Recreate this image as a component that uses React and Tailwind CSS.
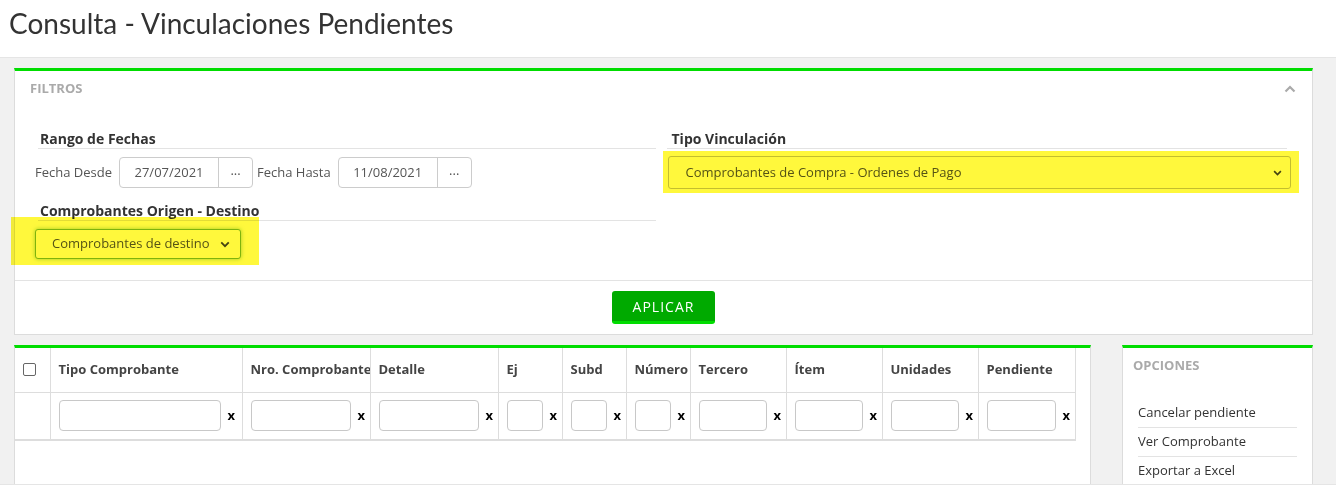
const columns = [
  { label: "Tipo Comprobante", w: "w-[192px]", input: "w-[162px]" },
  { label: "Nro. Comprobante", w: "w-[128px]", input: "w-[100px]" },
  { label: "Detalle", w: "w-[128px]", input: "w-[100px]" },
  { label: "Ej", w: "w-[64px]", input: "w-[36px]" },
  { label: "Subd", w: "w-[64px]", input: "w-[36px]" },
  { label: "Número", w: "w-[64px]", input: "w-[36px]" },
  { label: "Tercero", w: "w-[96px]", input: "w-[68px]" },
  { label: "Ítem", w: "w-[96px]", input: "w-[68px]" },
  { label: "Unidades", w: "w-[96px]", input: "w-[68px]" },
  { label: "Pendiente", w: "w-[97px]", input: "w-[69px]" },
];

const options = ["Cancelar pendiente", "Ver Comprobante", "Exportar a Excel"];

function Chevron({ className }) {
  return (
    <svg viewBox="0 0 12 8" className={className} fill="none">
      <path d="M1.5 1.5L6 6l4.5-4.5" stroke="currentColor" strokeWidth="2.2" />
    </svg>
  );
}

function DateField({ label, value, className = "" }) {
  return (
    <>
      <span className={`text-[13px] text-[#555] ${className}`}>{label}</span>
      <div className="ml-[7px] flex h-[31px] rounded-[4px] border border-[#ccc] bg-white">
        <span className="flex w-[98px] items-center justify-center text-[13px] text-[#555]">
          {value}
        </span>
        <span className="flex w-[34px] items-center justify-center border-l border-[#ccc] pb-1 text-[13px] text-[#555]">
          ...
        </span>
      </div>
    </>
  );
}

function Legend({ children, className }) {
  return (
    <div
      className={`border-b border-[#e3e3e3] pl-[2px] text-[14px] font-bold leading-[19px] text-[#333] ${className}`}
    >
      {children}
    </div>
  );
}

export default function App() {
  return (
    <div className="h-[494px] w-[1336px] overflow-hidden bg-white font-['Open_Sans',sans-serif]">
      <header className="h-[58px] border-b border-[#e5e5e5] bg-white px-[9px] pt-[2px]">
        <h1 className="font-['Lato',sans-serif] text-[28px] leading-[42px] text-[#333]">
          Consulta - Vinculaciones Pendientes
        </h1>
      </header>

      <main className="h-[426px] overflow-hidden bg-[#f1f1f1] pl-[14px] pr-[23px] pt-[10px]">
        {/* Filtros */}
        <section className="relative border-x border-b border-t-[3px] border-[#dcdcdc] border-t-[#00dd00] bg-white">
          <div className="flex h-[36px] items-center justify-between px-[15px]">
            <span className="text-[13px] font-bold text-[#aaa]">FILTROS</span>
            <Chevron className="mr-[1px] h-[8px] w-[12px] rotate-180 text-[#aaa]" />
          </div>

          <div className="grid grid-cols-2 pb-[21px] pt-[22px]">
            <div>
              <Legend className="ml-[23px] mr-[8px]">Rango de Fechas</Legend>
              <div className="ml-[20px] mt-[8px] flex items-center">
                <DateField label="Fecha Desde" value="27/07/2021" />
                <DateField label="Fecha Hasta" value="11/08/2021" className="ml-[4px]" />
              </div>
              <Legend className="ml-[23px] mr-[8px] mt-[13px]">
                Comprobantes Origen - Destino
              </Legend>
              <div className="ml-[20px] mt-[8px] flex h-[30px] w-[206px] items-center justify-between rounded-[3px] border border-[#7fb832] bg-white pl-[16px] pr-[10px] text-[13px] text-[#555] shadow-[0_0_4px_rgba(100,180,40,0.6)]">
                <span>Comprobantes de destino</span>
                <Chevron className="h-[7px] w-[10px] text-[#444]" />
              </div>
            </div>
            <div>
              <Legend className="ml-[3px] mr-[25px] pl-[5px]">Tipo Vinculación</Legend>
              <div className="ml-[4px] mr-[21px] mt-[7px] flex h-[33px] items-center justify-between rounded-[3px] border border-[#c4c4c4] bg-white pl-[17px] pr-[8px] text-[13px] text-[#555]">
                <span>Comprobantes de Compra - Ordenes de Pago</span>
                <Chevron className="h-[6px] w-[9px] text-[#444]" />
              </div>
            </div>
          </div>

          <div className="flex justify-center border-t border-[#e3e3e3] pb-[10px] pt-[10px]">
            <button className="h-[33px] w-[103px] rounded-[3px] border-b-[3px] border-[#00dd00] bg-[#00aa00] text-[14px] tracking-[1px] text-white">
              APLICAR
            </button>
          </div>

          {/* highlight marks */}
          <div className="pointer-events-none absolute left-[-4px] top-[146px] h-[48px] w-[248px] bg-[#fff83c] mix-blend-multiply" />
          <div className="pointer-events-none absolute left-[648px] top-[80px] h-[42px] w-[636px] bg-[#fff83c] mix-blend-multiply" />
        </section>

        <div className="mt-[10px] flex gap-[31px]">
          {/* table */}
          <section className="h-[200px] w-[1077px] border-x border-t-[3px] border-[#dcdcdc] border-t-[#00dd00] bg-white">
            <table className="w-[1060px] table-fixed border-collapse text-[13px]">
              <thead>
                <tr className="h-[44px]">
                  <th className="w-[35px] border-r border-[#ddd] text-left">
                    <span className="ml-[8px] block h-[13px] w-[13px] rounded-[2px] border border-[#666]" />
                  </th>
                  {columns.map((c) => (
                    <th
                      key={c.label}
                      className={`${c.w} overflow-hidden whitespace-nowrap border-r border-[#ddd] pl-[8px] pr-0 text-left font-bold text-[#444]`}
                    >
                      {c.label}
                    </th>
                  ))}
                </tr>
              </thead>
              <tbody>
                <tr className="h-[48px] border-b-2 border-t border-[#ddd]">
                  <td className="border-r border-[#ddd]" />
                  {columns.map((c) => (
                    <td key={c.label} className="border-r border-[#ddd] pl-[8px]">
                      <div className="flex items-center">
                        <span className={`${c.input} block h-[31px] shrink-0 rounded-[4px] border border-[#c8c8c8]`} />
                        <span className="ml-[7px] text-[13px] font-bold text-black">x</span>
                      </div>
                    </td>
                  ))}
                </tr>
              </tbody>
            </table>
          </section>

          {/* opciones */}
          <section className="h-[200px] w-[191px] border-x border-t-[3px] border-[#dcdcdc] border-t-[#00dd00] bg-white">
            <div className="flex h-[36px] items-center px-[10px]">
              <span className="text-[13px] font-bold text-[#aaa]">OPCIONES</span>
            </div>
            <ul className="mx-[15px] mt-[15px] text-[13px] text-[#333]">
              {options.map((o, i) => (
                <li
                  key={o}
                  className={`h-[29px] leading-[26px] ${i < options.length - 1 ? "border-b border-[#e3e3e3]" : ""}`}
                >
                  {o}
                </li>
              ))}
            </ul>
          </section>
        </div>
      </main>
      <div className="border-t border-[#e5e5e5]" />
    </div>
  );
}
